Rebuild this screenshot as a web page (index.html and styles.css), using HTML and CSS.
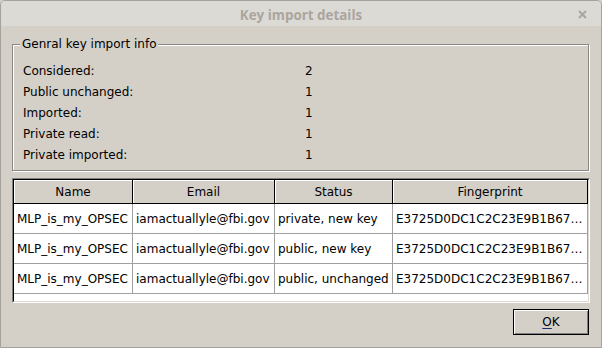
FILE: index.html
```html
<!DOCTYPE html>
<html>
<head>
<meta charset="utf-8">
<link rel="stylesheet" href="styles.css">
</head>
<body>
<div class="window">
  <div class="titlebar">
    <span></span>
    <span class="title">Key import details</span>
    <span class="close"><svg width="9" height="9" viewBox="0 0 9 9"><path d="M1 1 L8 8 M8 1 L1 8" stroke="#aaa7a2" stroke-width="2" fill="none"/></svg></span>
  </div>
  <div class="content">
    <fieldset class="group">
      <legend class="legend">Genral key import info</legend>
      <div class="stats">
        <span>Considered:</span><span>2</span>
        <span>Public unchanged:</span><span>1</span>
        <span>Imported:</span><span>1</span>
        <span>Private read:</span><span>1</span>
        <span>Private imported:</span><span>1</span>
      </div>
    </fieldset>
    <div class="frame">
      <div class="frame-inner">
        <div class="grid">
          <div class="th">Name</div><div class="th">Email</div><div class="th">Status</div><div class="th">Fingerprint</div>
          <div class="td">MLP_is_my_OPSEC</div><div class="td">iamactuallyle@fbi.gov</div><div class="td">private, new key</div><div class="td">E3725D0DC1C2C23E9B1B67…</div>
          <div class="td">MLP_is_my_OPSEC</div><div class="td">iamactuallyle@fbi.gov</div><div class="td">public, new key</div><div class="td">E3725D0DC1C2C23E9B1B67…</div>
          <div class="td">MLP_is_my_OPSEC</div><div class="td">iamactuallyle@fbi.gov</div><div class="td">public, unchanged</div><div class="td">E3725D0DC1C2C23E9B1B67…</div>
        </div>
      </div>
    </div>
    <div class="buttons">
      <button class="ok"><u>O</u>K</button>
    </div>
  </div>
</div>
</body>
</html>
```

FILE: styles.css
```css
html, body {
  margin: 0;
  padding: 0;
  background: #d4d0c8;
}
.window {
  width: 602px;
  height: 348px;
  box-sizing: border-box;
  border: 1px solid #a5a29d;
  border-radius: 5px 5px 0 0;
  background: #d4d0c8;
  display: flex;
  flex-direction: column;
  overflow: hidden;
  font-family: "DejaVu Sans", sans-serif;
  font-size: 12px;
  color: #000;
}
.titlebar {
  height: 25px;
  flex: none;
  background: #dcdad5;
  display: grid;
  grid-template-columns: 1fr auto 1fr;
  align-items: center;
}
.title {
  font-family: "Open Sans", sans-serif;
  font-weight: 700;
  font-size: 13.4px;
  color: #aaa59e;
  padding-top: 2px;
}
.close {
  justify-self: end;
  padding-right: 14px;
  display: flex;
  padding-top: 2px;
}
.content {
  flex: 1;
  display: flex;
  flex-direction: column;
  padding: 11px 11px 0 11px;
}
.group {
  margin: 0 1px 0 0;
  padding: 0;
  border: 1px solid #898783;
  box-shadow: inset 1px 1px 0 #fff, 1px 1px 0 #fff;
  min-width: 0;
}
.legend {
  margin-left: 7px;
  padding: 0 2px;
  line-height: 15px;
  background: #d4d0c8;
}
.stats {
  display: grid;
  grid-template-columns: 282px auto;
  grid-auto-rows: 21px;
  align-items: center;
  padding: 8px 0 5px 10px;
}
.frame {
  margin-top: 7px;
  border-style: solid;
  border-width: 1px;
  border-color: #808080 #fff #fff #808080;
}
.frame-inner {
  border-style: solid;
  border-width: 1px;
  border-color: #000 #dcd9d3 #dcd9d3 #000;
  background: #fff;
  height: 121px;
}
.grid {
  display: grid;
  grid-template-columns: 119px 142px 118px 195px;
  grid-template-rows: 24px 30px 30px 30px;
}
.th {
  box-sizing: border-box;
  background: #d4d0c8;
  border-right: 1px solid #000;
  border-bottom: 1px solid #000;
  box-shadow: inset 1px 1px 0 #fff;
  display: flex;
  align-items: center;
  justify-content: center;
  padding-top: 1px;
}
.td {
  box-sizing: border-box;
  border-right: 1px solid #a0a0a0;
  border-bottom: 1px solid #a0a0a0;
  display: flex;
  align-items: center;
  padding-left: 3px;
  white-space: nowrap;
  overflow: hidden;
}
.buttons {
  display: flex;
  justify-content: flex-end;
  margin-top: 6px;
  padding-right: 1px;
}
.ok {
  width: 76px;
  height: 26px;
  box-sizing: border-box;
  border: 1px solid #000;
  background: #d4d0c8;
  box-shadow: inset 1px 1px 0 #fff, inset -1px -1px 0 #808080;
  font-family: "DejaVu Sans", sans-serif;
  font-size: 12px;
  color: #000;
  padding: 0;
  margin-right: 0;
}
.ok u {
  text-decoration-color: #1a2a6a;
  text-underline-offset: 2px;
}
```
